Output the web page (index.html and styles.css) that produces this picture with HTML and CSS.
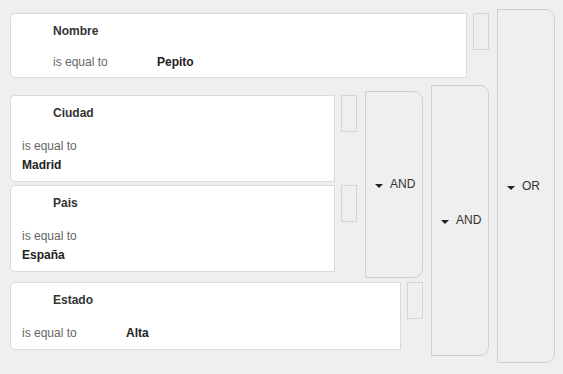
FILE: index.html
```html
<!DOCTYPE html>
<html lang="es">

<head>
    <meta charset="UTF-8">
    <meta name="viewport" content="width=device-width, initial-scale=1.0">
    <title>Query builder</title>
    <link rel="stylesheet" href="styles.css">
</head>

<body>
    <div class="group">
        <div class="group-rules group-rules--root">
            <div class="rule">
                <div class="rule-card rule-card--compact">
                    <div class="rule-field">Nombre</div>
                    <div class="rule-body rule-body--indent">
                        <span class="rule-op">is equal to</span>
                        <span class="rule-value">Pepito</span>
                    </div>
                </div>
                <div class="rule-handle"></div>
            </div>
            <div class="group group--outer">
                <div class="group-rules group-rules--outer">
                    <div class="group">
                        <div class="group-rules group-rules--inner">
                            <div class="rule">
                                <div class="rule-card">
                                    <div class="rule-field">Ciudad</div>
                                    <div class="rule-body rule-body--stacked">
                                        <span class="rule-op">is equal to</span>
                                        <span class="rule-value">Madrid</span>
                                    </div>
                                </div>
                                <div class="rule-handle"></div>
                            </div>
                            <div class="rule rule--next">
                                <div class="rule-card">
                                    <div class="rule-field">Pais</div>
                                    <div class="rule-body rule-body--stacked">
                                        <span class="rule-op">is equal to</span>
                                        <span class="rule-value">España</span>
                                    </div>
                                </div>
                                <div class="rule-handle"></div>
                            </div>
                        </div>
                        <div class="conj"><span class="caret"></span>AND</div>
                    </div>
                    <div class="rule rule--after-group">
                        <div class="rule-card">
                            <div class="rule-field">Estado</div>
                            <div class="rule-body">
                                <span class="rule-op">is equal to</span>
                                <span class="rule-value">Alta</span>
                            </div>
                        </div>
                        <div class="rule-handle"></div>
                    </div>
                </div>
                <div class="conj"><span class="caret"></span>AND</div>
            </div>
        </div>
        <div class="conj"><span class="caret"></span>OR</div>
    </div>
</body>

</html>
```

FILE: styles.css
```css
body {
    margin: 0;
    padding: 9px 8px 0 10px;
    background-color: #efefef;
    font-family: "Liberation Sans", Arial, sans-serif;
    font-size: 12px;
    line-height: 17px;
    color: #333;
}

.group {
    display: flex;
    gap: 8px;
}

.group-rules {
    flex: 1;
    display: flex;
    flex-direction: column;
}

.group-rules--root {
    padding: 4px 0 7px;
}

.group-rules--outer {
    padding: 6px 0 6px;
}

.group-rules--inner {
    padding: 4px 0 6px;
}

.group--outer {
    margin-top: 7px;
}

.rule {
    display: flex;
    gap: 6px;
    align-items: flex-start;
}

.rule--next {
    margin-top: 3px;
}

.rule--after-group {
    margin-top: 4px;
}

.rule-card {
    flex: 1;
    background-color: #fff;
    border: 1px solid #dadada;
    border-radius: 5px 0 0 5px;
    padding: 9px 11px 7px;
}

.rule-card--compact {
    padding-bottom: 6px;
}

.rule-field {
    padding-left: 31px;
    font-weight: bold;
    color: #333;
}

.rule-body {
    display: flex;
    margin-top: 16px;
}

.rule-card--compact .rule-body {
    margin-top: 14px;
}

.rule-body--indent {
    padding-left: 31px;
}

.rule-op {
    flex: 0 0 104px;
    color: #666;
}

.rule-value {
    font-weight: bold;
    color: #222;
}

.rule-body--stacked {
    flex-direction: column;
}

.rule-body--stacked .rule-op {
    flex: none;
}

.rule-body--stacked .rule-value {
    margin-top: 2px;
}

.rule-handle {
    flex: none;
    width: 16px;
    height: 37px;
    box-sizing: border-box;
    border: 1px solid #d4d4d4;
}

.conj {
    flex: none;
    width: 58px;
    box-sizing: border-box;
    display: flex;
    align-items: center;
    padding-left: 9px;
    border: 1px solid #cfcfcf;
    border-radius: 0 9px 9px 0;
    color: #333;
}

.caret {
    display: inline-block;
    width: 0;
    height: 0;
    border-left: 4px solid transparent;
    border-right: 4px solid transparent;
    border-top: 4px solid #222;
    margin-right: 7px;
    margin-top: 3px;
}
```
